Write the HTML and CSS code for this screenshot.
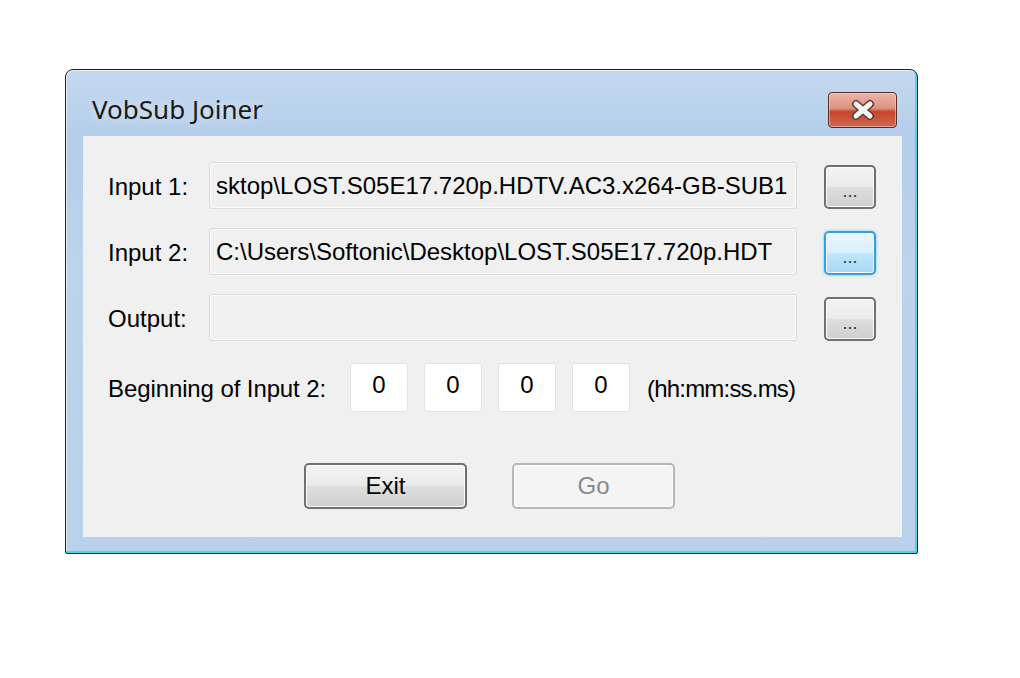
FILE: index.html
```html
<!DOCTYPE html>
<html lang="en">
<head>
    <meta charset="UTF-8">
    <title>VobSub Joiner</title>
    <link rel="stylesheet" href="styles.css">
</head>
<body>
    <div class="window">
        <div class="titlebar">
            <div class="title">VobSub Joiner</div>
            <div class="close-button">
                <svg width="32" height="22" viewBox="0 0 32 22">
                    <path d="M9 5 L23 17 M23 5 L9 17" stroke="#5a3a36" stroke-width="8" stroke-linecap="round"/>
                    <path d="M9 5 L23 17 M23 5 L9 17" stroke="#f4f4f4" stroke-width="5" stroke-linecap="round"/>
                </svg>
            </div>
        </div>

        <div class="client">
            <div class="file-row">
                <div class="label">Input 1:</div>
                <div class="path-box">sktop\LOST.S05E17.720p.HDTV.AC3.x264-GB-SUB1</div>
                <button class="win-button browse-button">...</button>
            </div>
            <div class="file-row">
                <div class="label">Input 2:</div>
                <div class="path-box">C:\Users\Softonic\Desktop\LOST.S05E17.720p.HDT</div>
                <button class="win-button browse-button hot">...</button>
            </div>
            <div class="file-row">
                <div class="label">Output:</div>
                <div class="path-box"></div>
                <button class="win-button browse-button">...</button>
            </div>

            <div class="time-row">
                <div class="label time-label">Beginning of Input 2:</div>
                <div class="time-box">0</div>
                <div class="time-box">0</div>
                <div class="time-box">0</div>
                <div class="time-box">0</div>
                <div class="time-hint">(hh:mm:ss.ms)</div>
            </div>

            <div class="action-row">
                <button class="win-button action-button">Exit</button>
                <button class="win-button action-button" disabled>Go</button>
            </div>
        </div>
    </div>
</body>
</html>
```

FILE: styles.css
```css
body {
    margin: 0;
    background-color: #ffffff;
    font-family: 'Liberation Sans', Arial, sans-serif;
}

.window {
    margin: 69px 0 0 65px;
    width: 853px;
    height: 485px;
    box-sizing: border-box;
    border: 1px solid #222;
    border-radius: 8px 8px 2px 2px;
    background: linear-gradient(to bottom, #c4d9f0 0%, #b4cde9 14%, #bcd3ec 40%, #b9d1ea 100%);
    box-shadow: inset -2px -2px 0 #4fd2ee, inset 1px 1px 0 rgba(255, 255, 255, 0.6);
    padding: 0 15px 16px 17px;
    display: flex;
    flex-direction: column;
}

.titlebar {
    height: 66px;
    display: flex;
    justify-content: space-between;
    align-items: flex-start;
    padding-left: 9px;
}

.title {
    font-family: 'Noto Sans', 'Open Sans', sans-serif;
    font-size: 26px;
    color: #1a1a1a;
    margin-top: 21px;
    text-shadow: 0 0 8px rgba(255, 255, 255, 0.7);
}

.close-button {
    margin-top: 22px;
    margin-right: 5px;
    width: 69px;
    height: 36px;
    box-sizing: border-box;
    border: 1px solid #5e2a26;
    border-radius: 4px;
    background: linear-gradient(to bottom, #eab4a8 0%, #dd9280 45%, #c5452c 55%, #d2694f 100%);
    box-shadow: inset 0 0 0 1px rgba(255, 220, 210, 0.5);
    display: flex;
    align-items: center;
    justify-content: center;
}

.client {
    flex: 1;
    background-color: #f0f0f0;
    padding: 26px 25px 0 25px;
    display: flex;
    flex-direction: column;
}

.label {
    font-size: 24px;
    color: #000;
    width: 101px;
    flex-shrink: 0;
    padding-top: 2px;
}

.file-row {
    display: flex;
    align-items: center;
    height: 47px;
    margin-bottom: 19px;
}

.path-box {
    width: 588px;
    height: 47px;
    box-sizing: border-box;
    border: 1px solid #dcdcdc;
    border-radius: 3px;
    background-color: #f0f0f0;
    box-shadow: inset 0 0 0 1px #fafafa;
    font-size: 24px;
    line-height: 45px;
    padding-left: 6px;
    white-space: nowrap;
    overflow: hidden;
}

.win-button {
    font-family: 'Liberation Sans', Arial, sans-serif;
    box-sizing: border-box;
    border: 2px solid #707070;
    border-radius: 5px;
    background: linear-gradient(to bottom, #f3f3f3 0%, #ebebeb 48%, #dddddd 52%, #cfcfcf 100%);
    box-shadow: inset 0 0 0 1px #fcfcfc;
    color: #000;
    padding: 0;
}

.browse-button {
    width: 52px;
    height: 44px;
    margin-left: 27px;
    margin-top: 3px;
    font-size: 18px;
    padding-top: 8px;
    color: #333;
}

.browse-button.hot {
    border-color: #3c9ed8;
    background: linear-gradient(to bottom, #eaf6fd 0%, #d9f0fc 48%, #bee6fd 52%, #a7d9f5 100%);
    box-shadow: inset 0 0 0 1px #fcfcfc, 0 0 3px #5cc8f4;
}

.time-row {
    display: flex;
    align-items: center;
    margin-top: 3px;
    height: 49px;
}

.time-label {
    width: 242px;
    letter-spacing: -0.1px;
}

.time-box {
    width: 58px;
    height: 49px;
    box-sizing: border-box;
    border: 1px solid #e2e3e6;
    border-radius: 3px;
    background-color: #ffffff;
    font-size: 24px;
    text-align: center;
    line-height: 42px;
    margin-right: 16px;
}

.time-hint {
    font-size: 24px;
    margin-left: 1px;
    letter-spacing: -0.8px;
    padding-top: 2px;
}

.action-row {
    display: flex;
    gap: 45px;
    padding-left: 196px;
    margin-top: 51px;
}

.action-button {
    width: 163px;
    height: 46px;
    font-size: 24px;
}

.action-button:disabled {
    border-color: #b4b8bb;
    background: #f4f4f4;
    color: #8a8a8a;
}
```
